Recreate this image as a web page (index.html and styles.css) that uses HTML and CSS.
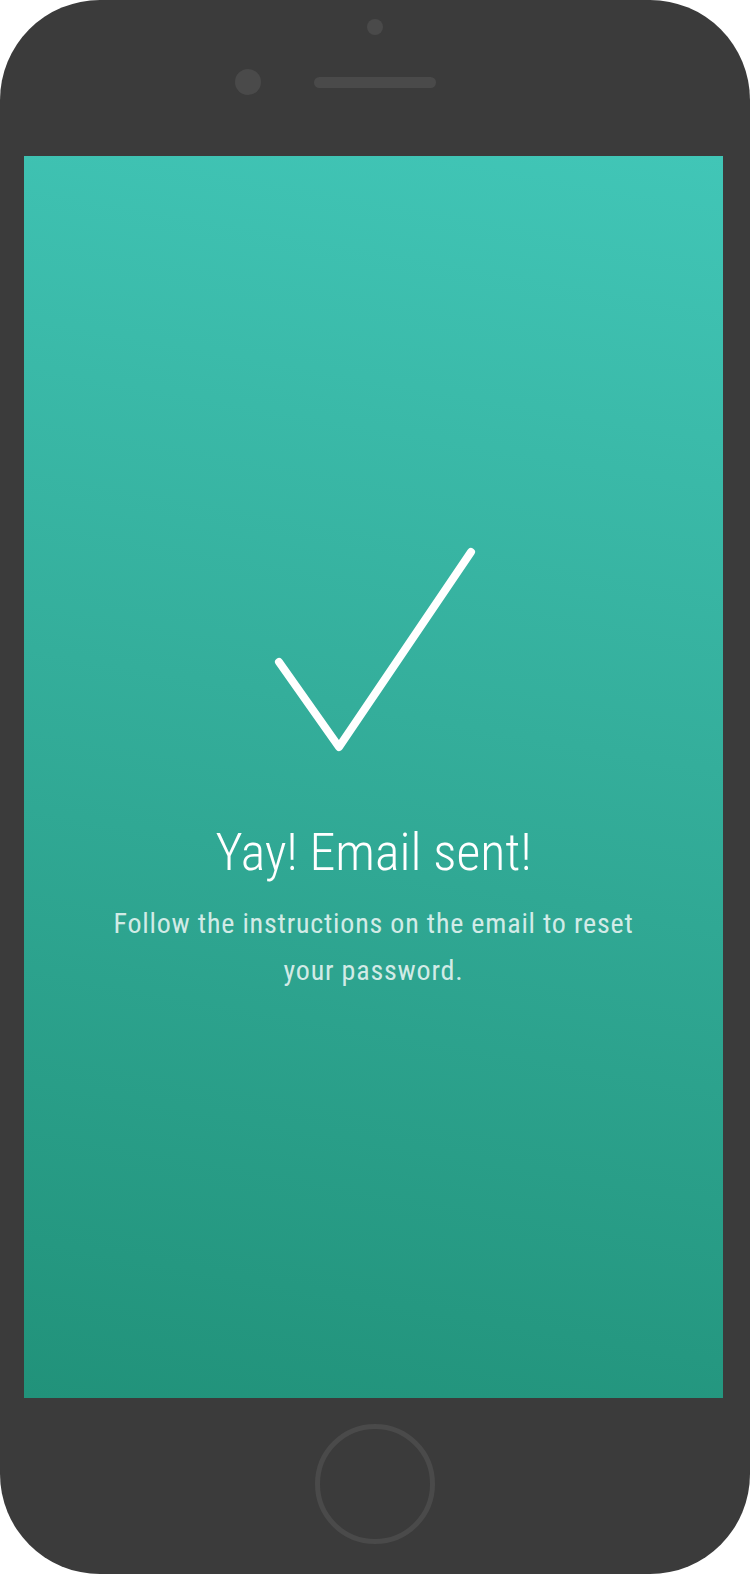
FILE: index.html
```html
<!DOCTYPE html>
<html>
    <head>
        <title>Email sent</title>
        <meta charset="utf-8">
        <meta name="viewport" content="width=device-width, initial-scale=1">
        <link rel="stylesheet" href="styles.css">
    </head>
    <body>
        <div class="phone">
            <div class="phone__top">
                <div class="phone__sensor"></div>
                <div class="phone__top-row">
                    <div class="phone__camera"></div>
                    <div class="phone__speaker"></div>
                </div>
            </div>

            <div class="screen">
                <svg class="screen__check" width="210" height="210" viewBox="0 0 210 210">
                    <polyline points="10,117 70,202 202,7" fill="none" stroke="#fff" stroke-width="8" stroke-linecap="round" stroke-linejoin="round"/>
                </svg>
                <h1 class="screen__title">Yay! Email sent!</h1>
                <p class="screen__text">
                    Follow the instructions on the email to reset<br>your password.
                </p>
            </div>

            <div class="phone__bottom">
                <div class="phone__home"></div>
            </div>
        </div>
    </body>
</html>
```

FILE: styles.css
```css
* {
    box-sizing: border-box;
}

body {
    margin: 0;
    background: #fff;
    font-family: Roboto, 'Liberation Sans', sans-serif;
}

.phone {
    width: 750px;
    height: 1574px;
    background: #3b3b3b;
    border-radius: 100px;
    display: flex;
    flex-direction: column;
}

.phone__top {
    height: 156px;
    display: flex;
    flex-direction: column;
    align-items: center;
    padding-top: 19px;
}

.phone__sensor {
    width: 16px;
    height: 16px;
    border-radius: 50%;
    background: #4a4a4a;
}

.phone__top-row {
    align-self: stretch;
    display: flex;
    align-items: center;
    gap: 53px;
    padding-left: 235px;
    margin-top: 34px;
}

.phone__camera {
    width: 26px;
    height: 26px;
    border-radius: 50%;
    background: #4a4a4a;
}

.phone__speaker {
    width: 122px;
    height: 11px;
    border-radius: 6px;
    background: #4a4a4a;
}

.screen {
    margin-left: 24px;
    width: 699px;
    height: 1242px;
    background: linear-gradient(190deg, #41c6b7 0%, #34ae9b 45%, #21927a 100%);
    display: flex;
    flex-direction: column;
    align-items: center;
    padding-top: 389px;
    color: #fff;
    text-align: center;
}

.screen__check {
    display: block;
}

.screen__title {
    margin: 72px 0 0 0;
    font-size: 52px;
    font-weight: 300;
    font-stretch: 87%;
    line-height: 1;
}

.screen__text {
    margin: 21px 0 0 0;
    font-size: 28px;
    font-weight: 400;
    font-stretch: 87%;
    letter-spacing: 0.8px;
    line-height: 47px;
    color: rgba(255, 255, 255, 0.8);
}

.phone__bottom {
    flex: 1;
    display: flex;
    justify-content: center;
    padding-top: 26px;
}

.phone__home {
    width: 120px;
    height: 120px;
    border-radius: 50%;
    border: 5px solid #4a4a4a;
}
```
